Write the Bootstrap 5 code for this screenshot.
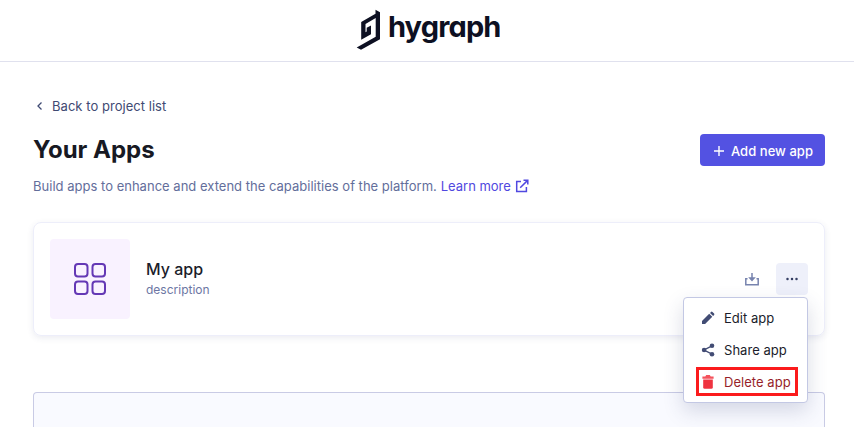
<!DOCTYPE html>
<html lang="en">
<head>
<meta charset="utf-8">
<meta name="viewport" content="width=device-width, initial-scale=1">
<title>Your Apps</title>
<link href="https://cdn.jsdelivr.net/npm/bootstrap@5.3.0/dist/css/bootstrap.min.css" rel="stylesheet">
<style>
body{font-family:Inter,sans-serif;font-size:13px;line-height:20px;letter-spacing:.04px;color:#1b1d2b;background:#fff}
svg{display:block;flex:none}
.topbar{height:62px;border-bottom:1px solid #e0e1ee}
.wordmark{font-weight:700;font-size:29px;fill:#0d1022;font-feature-settings:"cv11";letter-spacing:0}
.page{height:365px;padding:34px 29px 0 33px}
.back{color:#3f4a73;gap:6px}
.titlerow{margin-top:18px}
.title{font-size:24px;line-height:32px;font-weight:700;letter-spacing:0;color:#171923}
.add{background:#5352e2;color:#fff;width:125px;height:32px;border-radius:4px;font-size:13px;line-height:20px;font-weight:500;padding:1px 0 0 1px;gap:6px;letter-spacing:.04px}
.intro{color:#636e9b;margin-top:10px;letter-spacing:.015px}
.learn{color:#5048e0;gap:4px;margin-left:4px;letter-spacing:-.03px}
.appcard{height:114px;margin-top:26px;border:1px solid #edeefa;border-radius:8px;padding:0 16px;box-shadow:0 2px 6px rgba(60,70,120,.1)}
.tile{width:80px;height:80px;background:#f9f2ff;border-radius:4px}
.appname{font-size:16px;line-height:24px;font-weight:500;letter-spacing:0;margin-top:-3px}
.appdesc{font-size:12px;line-height:16px;color:#6c76a3;margin-top:1px;letter-spacing:0}
.more{width:32px;height:32px;background:#eef0fa;border-radius:4px}
.appmenu{left:683px;top:297px;width:125px;height:106px;padding:4px 0;background:#fff;border:1px solid #c3c8e4;border-radius:4px;box-shadow:0 8px 20px rgba(50,60,110,.18);z-index:5}
.entry{height:32px;padding-left:16px;gap:8px}
.danger-text{color:#971f2a}
.frame{left:696px;top:367px;width:102px;height:29px;border:3px solid #fb1b1c;z-index:6}
.panel{margin-top:56px;background:#f9faff;border:1px solid #c9cbe5;border-bottom:0;border-radius:4px 4px 0 0}
</style>
<script src="https://cdn.jsdelivr.net/npm/bootstrap@5.3.0/dist/js/bootstrap.bundle.min.js" defer></script>
</head>
<body class="position-relative">
<header class="topbar d-flex justify-content-center">
  <svg width="146" height="61" viewBox="354 0 146 61" role="img" aria-label="hygraph">
    <path fill="#0d1022" d="M375.500 9.700l4.500 2.600V39.200L361 49.800 356.700 47.500 375.700 36.700V18L365.500 24V32.300L366.700 31.600V27.800L371 25.500V34.200L361.200 39.800V22L375.500 13.800Z"/>
    <text class="wordmark" x="387.900" y="37" textLength="113.500" lengthAdjust="spacing">hygraph</text>
  </svg>
</header>
<main class="page d-flex flex-column">
  <div class="back d-flex align-items-center">
    <svg width="13" height="14" viewBox="0 0 13 14" fill="none" stroke="currentColor" stroke-width="1.300"><path d="M8.500 3.500L5 7l3.500 3.500"/></svg>
    <span>Back to project list</span>
  </div>
  <div class="titlerow d-flex justify-content-between align-items-center">
    <h1 class="title m-0">Your Apps</h1>
    <button class="add btn d-flex align-items-center justify-content-center border-0">
      <svg width="12" height="12" viewBox="0 0 12 12" stroke="#fff" stroke-width="1.400"><path d="M6 1v10M1 6h10"/></svg>
      <span>Add new app</span>
    </button>
  </div>
  <div class="intro d-flex">
    <span>Build apps to enhance and extend the capabilities of the platform.</span>
    <a class="learn d-flex align-items-center text-decoration-none" href="#"><span>Learn more</span>
      <svg width="14" height="14" viewBox="0 0 14 14" fill="none" stroke="currentColor" stroke-width="1.500"><path d="M6 2.600H1.700v9.800h9.700V8M8.500 1.200h4.300v4.300M12.600 1.400L5.200 8.800"/></svg></a>
  </div>
  <section class="appcard d-flex flex-shrink-0 align-items-center">
    <div class="tile d-flex align-items-center justify-content-center">
      <svg width="32" height="32" viewBox="0 0 32 32" fill="none" stroke="#6438b5" stroke-width="2"><rect x="1" y="1" width="12.500" height="12.500" rx="3"/><rect x="18.500" y="1" width="12.500" height="12.500" rx="3"/><rect x="1" y="18.500" width="12.500" height="12.500" rx="3"/><rect x="18.500" y="18.500" width="12.500" height="12.500" rx="3"/></svg>
    </div>
    <div class="ms-3 flex-grow-1">
      <div class="appname">My app</div>
      <div class="appdesc">description</div>
    </div>
    <svg class="me-3" width="16" height="16" viewBox="0 0 16 16" fill="none" stroke="#7783ae" stroke-width="1.500"><path d="M3.500 7.700H1.800V13.700H14.200V7.700H12.500M8 2v6"/><path d="M4.200 6.300h7.600L8 10.500z" fill="#7783ae" stroke="none"/></svg>
    <div class="more d-flex align-items-center justify-content-center">
      <svg width="14" height="4" viewBox="0 0 14 4" fill="#353e63"><circle cx="2.500" cy="2" r="1.250"/><circle cx="7" cy="2" r="1.250"/><circle cx="11.500" cy="2" r="1.250"/></svg>
    </div>
  </section>
  <div class="panel flex-grow-1"></div>
</main>
<div class="appmenu position-absolute">
  <div class="entry d-flex align-items-center">
    <svg width="16" height="16" viewBox="0 0 16 16" fill="#424c74"><path d="M2 10.900L9.200 3.700l3.100 3.100L5.100 14H2zM10 2.900l1-1q.8-.6 1.500 0l1.600 1.600q.6.700 0 1.500l-1 1z"/></svg>
    <span>Edit app</span>
  </div>
  <div class="entry d-flex align-items-center">
    <svg width="16" height="16" viewBox="0 0 16 16" fill="#424c74"><path d="M12 3.800L4 8l8 4.200" fill="none" stroke="#424c74" stroke-width="1.400"/><circle cx="12" cy="3.800" r="2.300"/><circle cx="4.100" cy="8" r="2.300"/><circle cx="12" cy="12.200" r="2.300"/></svg>
    <span>Share app</span>
  </div>
  <div class="entry d-flex align-items-center">
    <svg width="16" height="16" viewBox="0 0 16 16" fill="#ef3340"><path d="M3.200 5.500h9.600V13.300q0 1.500-1.500 1.500H4.700q-1.500 0-1.500-1.500z"/><path fill="#f4525c" d="M2.400 2.600H5.300L6.200 1h3.600l.9 1.600h2.900v2.100H2.400z"/></svg>
    <span class="danger-text">Delete app</span>
  </div>
</div>
<div class="frame position-absolute"></div>
</body>
</html>
